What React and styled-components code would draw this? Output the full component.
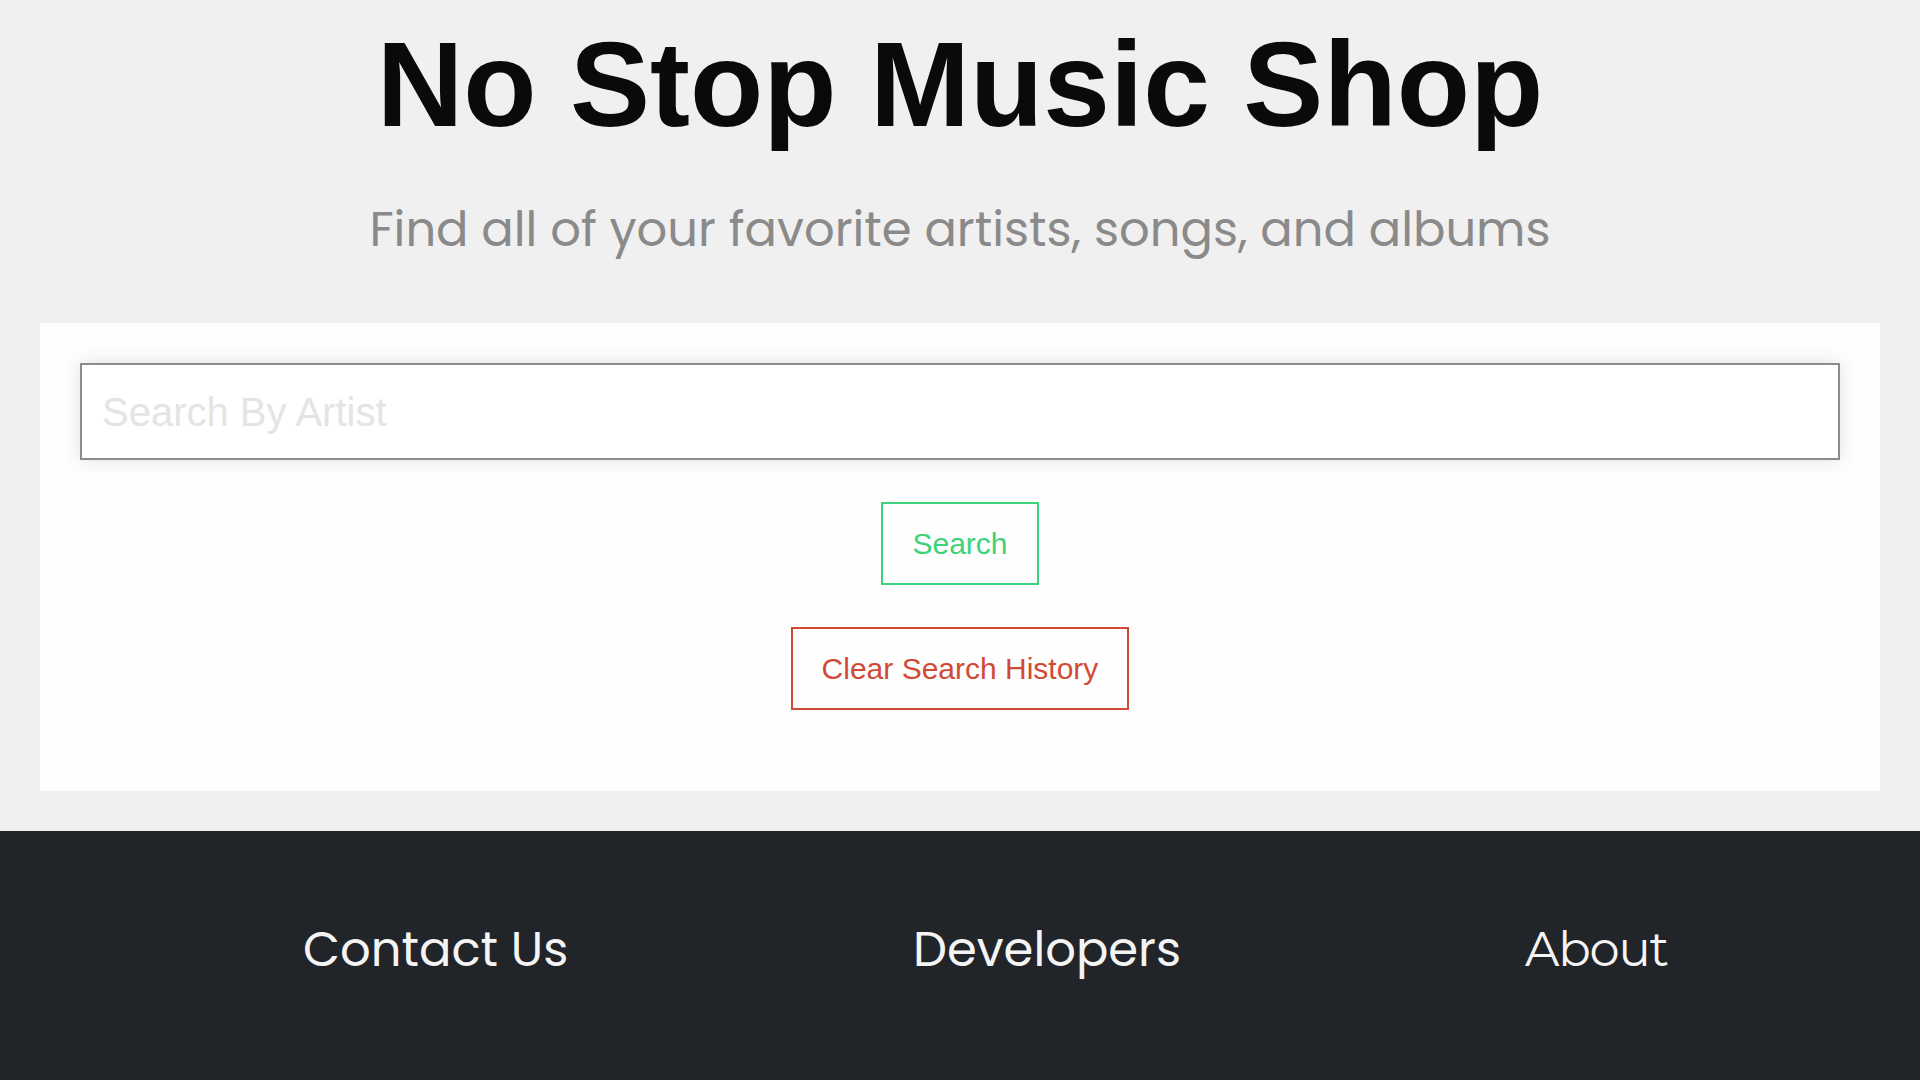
import React from 'react';
import styled, { createGlobalStyle } from 'styled-components';

const GlobalStyle = createGlobalStyle`
  html, body {
    margin: 0;
    padding: 0;
    background: #f0f0f0;
  }
  * {
    box-sizing: border-box;
  }
`;

const footerLinks = [
  { label: 'Contact Us', href: '#contact' },
  { label: 'Developers', href: '#developers' },
  { label: 'About', href: '#about', alt: true },
];

const App = () => {
  return (
    <>
      <GlobalStyle />
      <StyledPage>
        <StyledHeader>
          <h1>No Stop Music Shop</h1>
          <p>Find all of your favorite artists, songs, and albums</p>
        </StyledHeader>

        <StyledSearchCard>
          <StyledInput type='text' placeholder='Search By Artist' autoFocus />
          <StyledButton $color='#3dd27a'>Search</StyledButton>
          <StyledButton $color='#d04a36'>Clear Search History</StyledButton>
        </StyledSearchCard>

        <StyledFooter>
          {footerLinks.map(link => (
            <StyledFooterLink key={link.label} href={link.href} $alt={link.alt}>
              {link.label}
            </StyledFooterLink>
          ))}
        </StyledFooter>
      </StyledPage>
    </>
  );
};

export default App;

const StyledPage = styled.div`
  min-height: 100vh;
  display: flex;
  flex-direction: column;
`;

const StyledHeader = styled.header`
  text-align: center;
  padding-top: 15px;

  h1 {
    margin: 0;
    font-family: 'Liberation Sans', Arial, sans-serif;
    font-weight: 700;
    font-size: 120px;
    line-height: 138px;
    color: #0a0a0a;
  }

  p {
    margin: 44px 0 0;
    font-family: Poppins, 'Open Sans', sans-serif;
    font-weight: 400;
    font-size: 48px;
    line-height: 65px;
    color: #8a8a8a;
  }
`;

const StyledSearchCard = styled.section`
  margin: 61px 40px 0;
  padding: 40px 40px 81px;
  background: #fefefe;
  display: flex;
  flex-direction: column;
  align-items: center;
  gap: 42px;
`;

const StyledInput = styled.input`
  width: 100%;
  height: 97px;
  padding: 2px 20px 0;
  border: 2px solid #8c8c8c;
  background: #fff;
  box-shadow: 0 0 18px rgba(0, 0, 0, 0.12);
  font-family: 'Liberation Sans', Arial, sans-serif;
  font-size: 40px;
  color: #222;
  outline: none;
  caret-color: #000;

  &::placeholder {
    color: #e4e4e4;
  }
`;

const StyledButton = styled.button`
  padding: 22px 29px;
  border: 2px solid ${({ $color }) => $color};
  background: transparent;
  color: ${({ $color }) => $color};
  font-family: 'Liberation Sans', Arial, sans-serif;
  font-size: 30px;
  line-height: 35px;
  cursor: pointer;
`;

const StyledFooter = styled.footer`
  margin-top: 40px;
  flex: 1;
  background: #212529;
  padding: 86px 0 110px 303px;
  display: grid;
  grid-template-columns: 610px 612px auto;
  align-items: baseline;
  align-content: start;
`;

const StyledFooterLink = styled.a`
  font-family: ${({ $alt }) =>
    $alt ? "Montserrat, 'DejaVu Sans', sans-serif" : "Poppins, 'Open Sans', sans-serif"};
  font-size: 48px;
  line-height: 65px;
  letter-spacing: ${({ $alt }) => ($alt ? '-1.2px' : '0')};
  color: #f4f4f4;
  text-decoration: none;
  justify-self: start;
`;
